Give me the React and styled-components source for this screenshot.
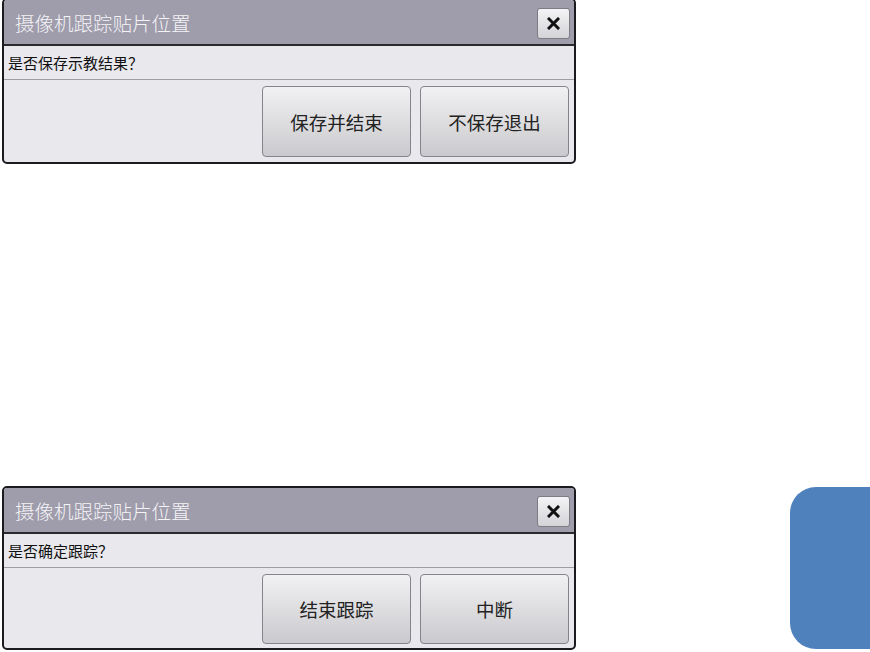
import styled, { createGlobalStyle } from 'styled-components';

const GlobalStyle = createGlobalStyle`
  html, body {
    margin: 0;
    padding: 0;
    background: #ffffff;
  }
  body {
    font-family: "Noto Sans CJK SC", "Noto Sans", sans-serif;
  }
`;

const Page = styled.div`
  width: 870px;
  height: 652px;
  display: flex;
  overflow: hidden;
  padding-left: 2px;
  box-sizing: border-box;
`;

const Column = styled.div`
  display: flex;
  flex-direction: column;
  gap: 322px;
  margin-top: -2px;
`;

const Dialog = styled.div`
  width: 570px;
  display: flex;
  flex-direction: column;
  border: 2px solid #1b1b1f;
  border-radius: 5px;
  overflow: hidden;
  background: #e8e8ed;
`;

const TitleBar = styled.div`
  height: 44px;
  display: flex;
  align-items: center;
  justify-content: space-between;
  padding: 0 4px 0 11px;
  background: #9f9cac;
  border-bottom: 2px solid #2a2a2e;
`;

const Title = styled.div`
  font-size: 19.5px;
  font-weight: 300;
  color: #f4f4f6;
`;

const CloseButton = styled.button`
  width: 33px;
  height: 31px;
  margin-top: 2px;
  padding: 0;
  display: flex;
  align-items: center;
  justify-content: center;
  border: 1px solid #7d7b84;
  border-radius: 3px;
  background: linear-gradient(#f4f4f6, #d3d3d8);
`;

const Message = styled.div`
  height: 33px;
  display: flex;
  align-items: center;
  padding-left: 4px;
  font-size: 15px;
  color: #111;
  border-bottom: 1px solid #9d9da2;
`;

const ButtonRow = styled.div`
  height: ${(p) => p.$h}px;
  display: flex;
  justify-content: flex-end;
  gap: 9px;
  padding: 6px 5px 0 0;
  box-sizing: border-box;
`;

const ActionButton = styled.button`
  width: 149px;
  height: ${(p) => p.$h}px;
  border: 1px solid #85838b;
  border-radius: 4px;
  background: linear-gradient(#f1f1f3, #cacace);
  font-family: "Noto Sans CJK SC", "Noto Sans", sans-serif;
  font-size: 18.5px;
  color: #222;
  padding: 0;
`;

const SideTab = styled.div`
  margin-left: auto;
  align-self: flex-end;
  margin-bottom: 3px;
  width: 80px;
  height: 162px;
  background: #4f81bd;
  border-radius: 26px 0 0 26px;
`;

function CloseIcon() {
  return (
    <svg width="13" height="13" viewBox="0 0 13 13">
      <path d="M2 2 L11 11 M11 2 L2 11" stroke="#111" strokeWidth="3" strokeLinecap="square" />
    </svg>
  );
}

function ConfirmDialog({ message, buttons, rowHeight, buttonHeight }) {
  return (
    <Dialog>
      <TitleBar>
        <Title>摄像机跟踪贴片位置</Title>
        <CloseButton>
          <CloseIcon />
        </CloseButton>
      </TitleBar>
      <Message>{message}</Message>
      <ButtonRow $h={rowHeight}>
        {buttons.map((b) => (
          <ActionButton key={b} $h={buttonHeight}>
            {b}
          </ActionButton>
        ))}
      </ButtonRow>
    </Dialog>
  );
}

export default function App() {
  return (
    <>
      <GlobalStyle />
      <Page>
        <Column>
          <ConfirmDialog
            message="是否保存示教结果？"
            buttons={['保存并结束', '不保存退出']}
            rowHeight={82}
            buttonHeight={71}
          />
          <ConfirmDialog
            message="是否确定跟踪？"
            buttons={['结束跟踪', '中断']}
            rowHeight={80}
            buttonHeight={70}
          />
        </Column>
        <SideTab />
      </Page>
    </>
  );
}
